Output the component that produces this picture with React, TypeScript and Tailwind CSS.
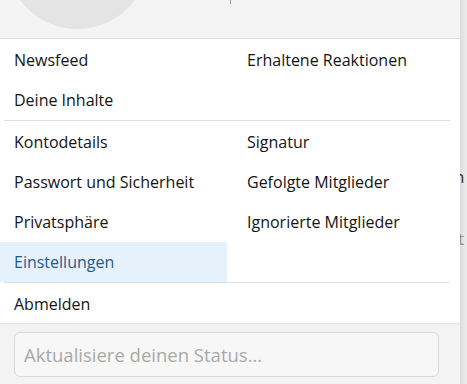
const leftTop = ['Newsfeed', 'Deine Inhalte']
const rightTop = ['Erhaltene Reaktionen', '']

const account = [
  ['Kontodetails', 'Signatur'],
  ['Passwort und Sicherheit', 'Gefolgte Mitglieder'],
  ['Privatsphäre', 'Ignorierte Mitglieder'],
  ['Einstellungen', ''],
]

const MenuItem = ({ label, active, h }: { label: string; active?: boolean; h: string }) => (
  <div
    className={`${h} flex items-center pl-[14px] pt-[1px] ${
      active ? 'bg-[#e5f1fb] text-[#1f5b8d]' : 'text-[#141414]'
    }`}
  >
    {label}
  </div>
)

const App = () => {
  return (
    <div
      className="w-[467px] h-[384px] flex overflow-hidden bg-[#ececec] text-[16px]"
      style={{ fontFamily: '"Open Sans", "Noto Sans", sans-serif' }}
    >
      <div className="w-[460px] shrink-0 bg-white flex flex-col">
        <div className="h-[39px] shrink-0 bg-[#f4f4f4] border-b border-[#dddddd] relative overflow-hidden">
          <div className="absolute left-[6px] top-[-114px] w-[143px] h-[143px] rounded-full bg-[#e4e4e4]" />
          <div className="absolute left-[230px] top-0 w-[1px] h-[4px] bg-[#9a9a9a]" />
        </div>

        <div className="h-[81px] grid grid-cols-[227px_1fr] gap-x-[6px]">
          <div>
            {leftTop.map((l) => (
              <MenuItem key={l} label={l} h="h-[40.5px]" />
            ))}
          </div>
          <div>
            {rightTop.map((l, i) => (
              <MenuItem key={i} label={l} h="h-[40.5px]" />
            ))}
          </div>
        </div>
        <div className="ml-[4px] w-[446px] h-[1px] bg-[#dedede]" />

        <div className="h-[161px] grid grid-cols-[227px_1fr] gap-x-[6px]">
          <div>
            {account.map(([l]) => (
              <MenuItem key={l} label={l} h="h-[40.25px]" active={l === 'Einstellungen'} />
            ))}
          </div>
          <div>
            {account.map(([, r], i) => (
              <MenuItem key={i} label={r} h="h-[40.25px]" />
            ))}
          </div>
        </div>
        <div className="ml-[4px] w-[446px] h-[1px] bg-[#dedede]" />

        <MenuItem label="Abmelden" h="h-[40px]" />

        <div className="flex-1 bg-[#f3f3f3] border-t border-[#e2e2e2] px-[14px] pt-[8px]">
          <div className="w-[425px] h-[45px] rounded-[6px] border border-[#d9d9d9] bg-[#f7f7f7] flex items-center pl-[9px] text-[18.5px] text-[#a9a9a9]">
            Aktualisiere deinen Status...
          </div>
        </div>
      </div>

      <div className="flex-1 bg-gradient-to-r from-[#dcdcdc] to-[#eeeeee] overflow-hidden relative text-[17px]">
        <span className="absolute left-[-6px] top-[164px] text-[#333333]">n</span>
        <span className="absolute left-[-2px] top-[226px] text-[#8a8a8a]">t</span>
      </div>
    </div>
  )
}

export default App
